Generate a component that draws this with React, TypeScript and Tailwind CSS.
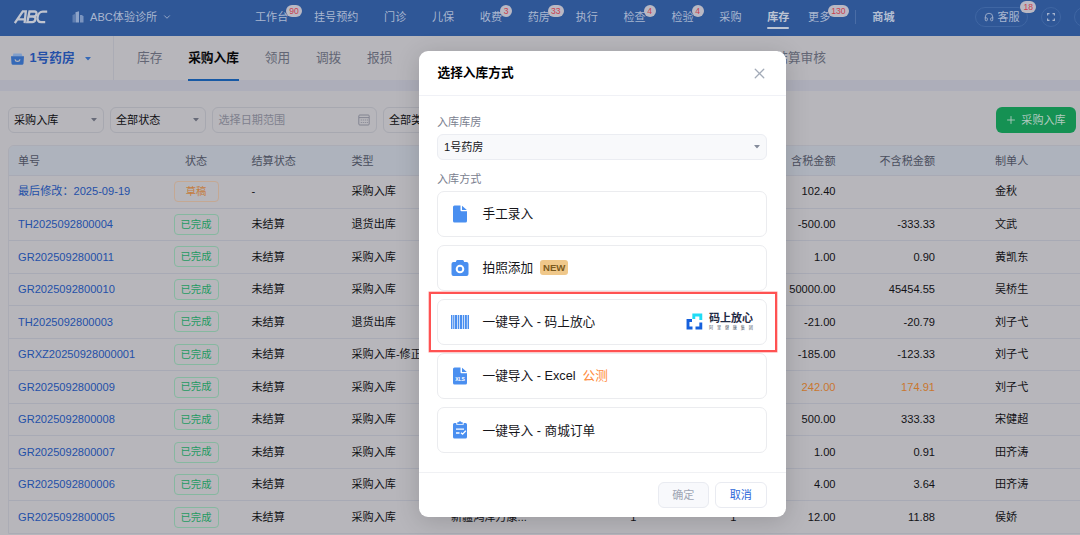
import React from 'react';
import { clsx } from 'clsx';
import { ChevronDown, Headphones, Plus, X } from 'lucide-react';

interface NavItem {
  label: string;
  badge?: string;
}

interface StockRow {
  no: string;
  draft?: boolean;
  type: string;
  supplier?: string;
  kinds?: string;
  count?: string;
  amount: string;
  amountNet: string;
  creator: string;
  warn?: boolean;
}

const navItems: NavItem[] = [
  { label: '工作台', badge: '90' },
  { label: '挂号预约' },
  { label: '门诊' },
  { label: '儿保' },
  { label: '收费', badge: '3' },
  { label: '药房', badge: '33' },
  { label: '执行' },
  { label: '检查', badge: '4' },
  { label: '检验', badge: '4' },
  { label: '采购' },
];

const rows: StockRow[] = [
  { no: '最后修改\uff1a2025-09-19', draft: true, type: '采购入库', amount: '102.40', amountNet: '', creator: '金秋' },
  { no: 'TH2025092800004', type: '退货出库', amount: '-500.00', amountNet: '-333.33', creator: '文武' },
  { no: 'GR2025092800011', type: '采购入库', amount: '1.00', amountNet: '0.90', creator: '黄凯东' },
  { no: 'GR2025092800010', type: '采购入库', amount: '50000.00', amountNet: '45454.55', creator: '吴桥生' },
  { no: 'TH2025092800003', type: '退货出库', amount: '-21.00', amountNet: '-20.79', creator: '刘子弋' },
  { no: 'GRXZ20250928000001', type: '采购入库-修正', amount: '-185.00', amountNet: '-123.33', creator: '刘子弋' },
  { no: 'GR2025092800009', type: '采购入库', amount: '242.00', amountNet: '174.91', creator: '刘子弋', warn: true },
  { no: 'GR2025092800008', type: '采购入库', amount: '500.00', amountNet: '333.33', creator: '宋健超' },
  { no: 'GR2025092800007', type: '采购入库', amount: '1.00', amountNet: '0.91', creator: '田齐涛' },
  { no: 'GR2025092800006', type: '采购入库', amount: '4.00', amountNet: '3.64', creator: '田齐涛' },
  { no: 'GR2025092800005', type: '采购入库', supplier: '新疆鸿泽万康...', kinds: '1', count: '1', amount: '12.00', amountNet: '11.88', creator: '侯娇' },
];

const gridCols =
  'grid grid-cols-[157px_76px_100px_99.5px_99.5px_105.5px_100px_99px_99.5px_1fr] items-center';

function Caret({ className }: { className?: string }) {
  return (
    <svg width="6" height="4" viewBox="0 0 7 4.500" className={clsx('shrink-0', className)}>
      <path d="M0.600 0h5.800a.3.3 0 0 1 .2.500L4 3.500a0.700 0.700 0 0 1-1 0L.4.500A.3.3 0 0 1 .6 0z" fill="currentColor" />
    </svg>
  );
}

function Badge({ children, className }: { children: React.ReactNode; className: string }) {
  return (
    <span
      className={clsx(
        'absolute h-[12px] min-w-[12px] rounded-full bg-[#b9b8c3] px-[3px] text-center text-[8.6px] leading-[12px] text-[#c93f4f]',
        className,
      )}
    >
      {children}
    </span>
  );
}

function TopBar() {
  return (
    <header className="flex h-[36px] shrink-0 items-center bg-[#2f5797] pb-[2px] text-[11.1px] text-[#a9b6cf]">
      <svg width="34" height="14" viewBox="0 0 34 14" className="ml-[14px] shrink-0" fill="none" stroke="#c0c4cf" strokeWidth="2.3">
        <path d="M.8 13 8.800 1.300h3L10.600 13.200M3.500 9.300h7.500" />
        <path d="M13.300 12.200 15.500 1.500h5c3.200 0 2.400 4.700-.6 5h-4.500 3.700c3.600.2 2.800 5.700-1 5.700z" />
        <path d="M33.200 1.700h-4.400c-5.800 0-7.600 10.500-1.600 10.500h4" />
      </svg>
      <svg width="12" height="12" viewBox="0 0 12 12" className="ml-[24px] shrink-0" fill="#8ea4c9">
        <path d="M0.500 4 3 3v8.500H.5z" opacity=".5" />
        <path d="M3.500 1.200 7 .3v11.200H3.500z" />
        <path d="M8 4h2l1.500 1.500v6H8z" opacity=".8" />
      </svg>
      <span className="ml-[6px] w-[68px] shrink-0">ABC体验诊所</span>
      <ChevronDown size={10} className="ml-[4px] shrink-0" />

      <nav className="ml-[83px] flex shrink-0 gap-[25.7px]">
        {navItems.map((item) => (
          <span key={item.label} className="relative">
            {item.label}
            {item.badge && <Badge className="-top-[4px] left-[calc(100%-2px)]">{item.badge}</Badge>}
          </span>
        ))}
        <span className="relative font-bold text-[#bcc4d3]">
          库存
          <span className="absolute -bottom-[4px] left-0 h-[2px] w-full rounded-full bg-[#bcc4d3]" />
        </span>
        <span className="relative -ml-[7px]">
          更多
          <Badge className="-top-[4px] left-[calc(100%-2px)]">130</Badge>
        </span>
      </nav>
      <span className="ml-[25px] h-[14px] w-px shrink-0 bg-[#4a6da6]" />
      <span className="ml-[16px] shrink-0 font-bold text-[#b3bed2]">商城</span>

      <span className="relative ml-[81px] flex h-[20px] w-[53px] shrink-0 items-center justify-center gap-[3px] rounded-full border border-[#3f66a3]">
        <Headphones size={10} />
        客服
        <Badge className="-top-[7px] left-[44px]">18</Badge>
      </span>
      <span className="ml-[13px] flex size-[20px] shrink-0 items-center justify-center rounded-full border border-[#3f66a3]">
        <svg width="8" height="8" viewBox="0 0 8 8" fill="none" stroke="currentColor" strokeWidth="1.100">
          <path d="M.6 2.500V.6h1.900M5.500.6h1.900v1.900M7.400 5.500v1.900H5.500M2.500 7.400H.6V5.500" />
        </svg>
      </span>
      <span className="ml-[13px] size-[20px] shrink-0 rounded-full border border-[#3f66a3]" />
    </header>
  );
}

function SubNav() {
  return (
    <div className="flex h-[44px] shrink-0 items-center text-[12.7px] text-[#636675]">
      <div className="flex h-full w-[114px] shrink-0 items-center border-r border-[#abacb5] pt-[2px] pl-[11px] font-bold text-[#2450a8]">
        <svg width="13" height="12" viewBox="0 0 13 12" className="mr-[5.500px]">
          <path d="M2.500.5h8l1 3h-10z" fill="#819fcb" />
          <path d="M0 3.200h13l-.5 7.300a1.500 1.500 0 0 1-1.500 1.300H2A1.500 1.500 0 0 1 .5 10.500z" fill="#3569b7" />
          <path d="M4 6.300c.5 2.800 4.500 2.800 5 0" stroke="#b7b6bb" strokeWidth="1.200" fill="none" />
        </svg>
        1号药房
        <Caret className="ml-[10px] text-[#3569b7]" />
      </div>
      <div className="flex h-full items-center gap-[25.800px] pl-[23px]">
        <span className="pt-[2px]">库存</span>
        <span className="relative flex h-full items-center pt-[2px] font-bold text-[#08080a]">
          采购入库
          <span className="absolute -bottom-px left-0 h-[2px] w-full bg-[#1759a5]" />
        </span>
        <span className="pt-[2px]">领用</span>
        <span className="pt-[2px]">调拨</span>
        <span className="pt-[2px]">报损</span>
        <span className="ml-[357px] pt-[2px]">结算审核</span>
      </div>
    </div>
  );
}

function FilterSelect({ label }: { label: string }) {
  return (
    <div className="flex h-[26px] w-[96px] items-center justify-between rounded-[6px] border border-[#a7a8b0] pr-[6px] pl-[5.500px] text-[#0f0f12]">
      {label}
      <Caret className="text-[#676a78]" />
    </div>
  );
}

function Filters() {
  return (
    <div className="flex h-[26px] shrink-0 gap-[6px] px-[7.500px]">
      <FilterSelect label="采购入库" />
      <FilterSelect label="全部状态" />
      <div className="flex w-[165px] items-center justify-between rounded-[6px] border border-[#a7a8b0] px-[6px] text-[#7e808d]">
        选择日期范围
        <svg width="12" height="12" viewBox="0 0 12 12" fill="none" stroke="#7e808d" strokeWidth=".9">
          <rect x=".8" y="1" width="10.400" height="10" rx="1" />
          <path d="M1 3.600h10" />
          <path d="M2.800 6h7M2.800 8.500h7" strokeDasharray="1 1" />
        </svg>
      </div>
      <FilterSelect label="全部类型" />
      <div className="mr-[-3px] ml-auto flex w-[80px] items-center justify-center gap-[4px] rounded-[6px] bg-[#159153] text-[#b0c9bf]">
        <Plus size={12} strokeWidth={1.8} />
        采购入库
      </div>
    </div>
  );
}

function StatusTag({ draft }: { draft?: boolean }) {
  return (
    <span
      className={clsx(
        'ml-[7.500px] flex h-[21px] w-[45px] items-center justify-center rounded-[4px] border text-[10.3px]',
        draft ? 'border-[#c4a893] text-[#c47d40]' : 'border-[#86b8a0] text-[#1f9a62]',
      )}
    >
      {draft ? '草稿' : '已完成'}
    </span>
  );
}

function StockTable() {
  return (
    <div className="mt-[12px] ml-[8px] w-[1090px] rounded-t-[6px] border border-[#abacb5] text-[11.1px] text-[#121216]">
      <div className={clsx(gridCols, 'h-[29px] rounded-t-[5px] bg-[#aeb3bd] pt-px text-[#4b4f5d]')}>
        <span className="pl-[9px]">单号</span>
        <span className="ml-[7.500px] w-[45px] text-center">状态</span>
        <span className="pl-[9.5px]">结算状态</span>
        <span className="pl-[9.5px]">类型</span>
        <span className="pl-[9.5px]">供应商</span>
        <span className="pr-[10px] text-right">品种</span>
        <span className="pr-[10px] text-right">数量</span>
        <span className="pr-[10px] text-right">含税金额</span>
        <span className="pr-[10px] text-right">不含税金额</span>
        <span className="pl-[50px]">制单人</span>
      </div>
      {rows.map((row) => (
        <div key={row.no} className={clsx(gridCols, 'h-[32.55px] border-t border-[#a8aab5]')}>
          <span className="pl-[9px] text-[#2450a8]">{row.no}</span>
          <StatusTag draft={row.draft} />
          <span className="pl-[9.5px]">{row.draft ? '-' : '未结算'}</span>
          <span className="pl-[9.5px]">{row.type}</span>
          <span className="pl-[9.5px]">{row.supplier}</span>
          <span className="pr-[10px] text-right">{row.kinds}</span>
          <span className="pr-[10px] text-right">{row.count}</span>
          <span className={clsx('pr-[10px] text-right', row.warn && 'text-[#c9772f]')}>{row.amount}</span>
          <span className={clsx('pr-[10px] text-right', row.warn && 'text-[#c9772f]')}>{row.amountNet}</span>
          <span className="pl-[50px]">{row.creator}</span>
        </div>
      ))}
    </div>
  );
}

function FileIcon({ xls }: { xls?: boolean }) {
  return (
    <svg width="18" height="18" viewBox="0 0 18 18" fill="#4a8ff0">
      <path d="M3.500.5H9.500V5.200a1 1 0 0 0 1 1H16V16a1.500 1.500 0 0 1-1.500 1.500h-11A1.500 1.500 0 0 1 2 16V2A1.500 1.500 0 0 1 3.500.5z" />
      <path d="M11 .7 15.800 5H11z" />
      {xls && (
        <text x="9" y="14.300" textAnchor="middle" fontSize="5" fontWeight="700" fill="#fff" fontFamily="Liberation Sans, sans-serif">
          XLS
        </text>
      )}
    </svg>
  );
}

function CameraIcon() {
  return (
    <svg width="18" height="18" viewBox="0 0 18 18">
      <path d="M6.500 1h5a1.500 1.500 0 0 1 1.400 1.200l.3.800h2.300A2 2 0 0 1 17.500 5v10a2 2 0 0 1-2 2h-13a2 2 0 0 1-2-2V5a2 2 0 0 1 2-2h2.300l.3-.8A1.500 1.500 0 0 1 6.500 1z" fill="#4a8ff0" />
      <circle cx="9" cy="10" r="3.300" fill="none" stroke="#fff" strokeWidth="2" />
    </svg>
  );
}

function BarcodeIcon() {
  return (
    <svg width="18" height="14" viewBox="0 0 18 14" fill="#4a8ff0">
      <path d="M0 0h1.200v14H0zM2.200 0h1v14h-1zM4 0h2v14H4zM7 0h1v14H7zM9 0h2v14H9zM12 0h1v14h-1zM14 0h1.800v14H14zM16.800 0H18v14h-1.200z" />
      <path d="M0 0h18v14H0z" opacity=".3" />
    </svg>
  );
}

function OrderIcon() {
  return (
    <svg width="18" height="18" viewBox="0 0 18 18">
      <path d="M3.500 2h1.800v1.800h7.400V2h1.800A1.500 1.500 0 0 1 16 3.500V16a1.500 1.500 0 0 1-1.500 1.500h-11A1.500 1.500 0 0 1 2 16V3.500A1.500 1.500 0 0 1 3.500 2z" fill="#4a8ff0" />
      <path d="M6.300 1.200h1.200a1.600 1.600 0 0 1 3 0h1.200v1.700H6.300z" fill="#4a8ff0" />
      <path d="M5 8.200h8M5 12h3.500M10 11.700l1.600 1.500 3.200-3.400" stroke="#fff" strokeWidth="1.300" fill="none" />
    </svg>
  );
}

function MashangLogo() {
  return (
    <div className="flex items-center gap-[6px]">
      <svg width="17" height="17" viewBox="0 0 17 17" fill="none" strokeWidth="2.900">
        <path d="M7.800 6V2h7v5" stroke="#1fdcf5" />
        <path d="M6 7.500H2V15h4.500" stroke="#1560dc" />
        <path d="M9.500 15H14.800V9.500" stroke="#1560dc" />
      </svg>
      <div className="w-[44px] text-[#1f2a44]">
        <div className="text-[11px] leading-[11px] font-bold">码上放心</div>
        <div className="mt-[1px] flex justify-between text-[4.2px] leading-[5px] text-[#4b5468]">
          {'阿里健康集团'.split('').map((c) => (
            <span key={c}>{c}</span>
          ))}
        </div>
      </div>
    </div>
  );
}

interface MethodCardProps {
  icon: React.ReactNode;
  label: string;
  extra?: React.ReactNode;
  right?: React.ReactNode;
  highlighted?: boolean;
}

function MethodCard({ icon, label, extra, right, highlighted }: MethodCardProps) {
  return (
    <div className="relative flex h-[46.2px] items-center rounded-[7px] border border-[#ebecef] pr-[13px] pl-[13px] text-[12.7px] text-[#16161a]">
      <span className="mr-[13.5px] flex w-[18px] justify-center">{icon}</span>
      <span className="pt-[1.5px]">{label}</span>
      {extra}
      {right && <span className="ml-auto">{right}</span>}
      {highlighted && (
        <span className="absolute -top-[8px] -right-[10.5px] -bottom-[8px] -left-[9.5px] z-10 border-[2px] border-[#ff5252] ring-[0.5px] ring-[#ff5252]/60" />
      )}
    </div>
  );
}

function StockInDialog() {
  return (
    <div className="flex h-[466px] w-[367px] flex-col rounded-[9px] bg-white shadow-[0_4px_24px_rgba(0,0,0,0.16)]">
      <div className="flex h-[44.5px] shrink-0 items-center justify-between border-b border-[#f0f1f6] pt-[2px] pr-[18px] pl-[19px] text-[12.7px] font-bold text-black">
        选择入库方式
        <X size={17} strokeWidth={1.8} className="text-[#a3abb8]" />
      </div>
      <div className="flex-1 px-[18.5px] pt-[18px] text-[11.1px] text-[#7b8190]">
        <div className="h-[16px] leading-[16px]">入库库房</div>
        <div className="mt-[4px] flex h-[26px] items-center justify-between rounded-[6px] border border-[#ebedf2] bg-[#f8f9fb] px-[6px] text-[#16161a]">
          <span className="pt-px">1号药房</span>
          <Caret className="text-[#858c9b]" />
        </div>
        <div className="mt-[11px] h-[16px] leading-[16px]">入库方式</div>
        <div className="mt-[4px] flex flex-col gap-[8px]">
          <MethodCard icon={<FileIcon />} label="手工录入" />
          <MethodCard
            icon={<CameraIcon />}
            label="拍照添加"
            extra={
              <span className="ml-[7px] h-[15px] w-[28px] rounded-[3px] bg-[#f0c88a] text-center text-[9.6px] leading-[15px] font-bold text-[#7c5b20]">
                NEW
              </span>
            }
          />
          <MethodCard icon={<BarcodeIcon />} label="一键导入 - 码上放心" right={<MashangLogo />} highlighted />
          <MethodCard
            icon={<FileIcon xls />}
            label="一键导入 - Excel"
            extra={<span className="ml-[7px] pt-[1.5px] text-[#ff8c40]">公测</span>}
          />
          <MethodCard icon={<OrderIcon />} label="一键导入 - 商城订单" />
        </div>
      </div>
      <div className="flex h-[45px] shrink-0 items-center justify-end gap-[6px] border-t border-[#f0f1f4] pr-[19px] text-[11.1px]">
        <button className="h-[26px] w-[51.5px] rounded-[6px] border border-[#e9ebf1] bg-[#f8f9fc] text-[#a0a6b4]">确定</button>
        <button className="h-[26px] w-[51.5px] rounded-[6px] border border-[#e9ebf1] bg-white text-[#2b66d9]">取消</button>
      </div>
    </div>
  );
}

export default function App() {
  return (
    <div className="relative flex h-[535px] w-[1080px] flex-col overflow-hidden bg-[#b7b6bb] font-['Liberation_Sans','Noto_Sans_CJK_SC',sans-serif] leading-normal whitespace-nowrap">
      <TopBar />
      <SubNav />
      <div className="h-[11px] shrink-0 bg-[#adaeba]" />
      <main className="flex flex-col pt-[16px] text-[11.1px]">
        <Filters />
        <StockTable />
      </main>

      {/* Dialog layer */}
      <div className="absolute inset-0 pt-[51px] pl-[418.5px]">
        <StockInDialog />
      </div>
    </div>
  );
}
